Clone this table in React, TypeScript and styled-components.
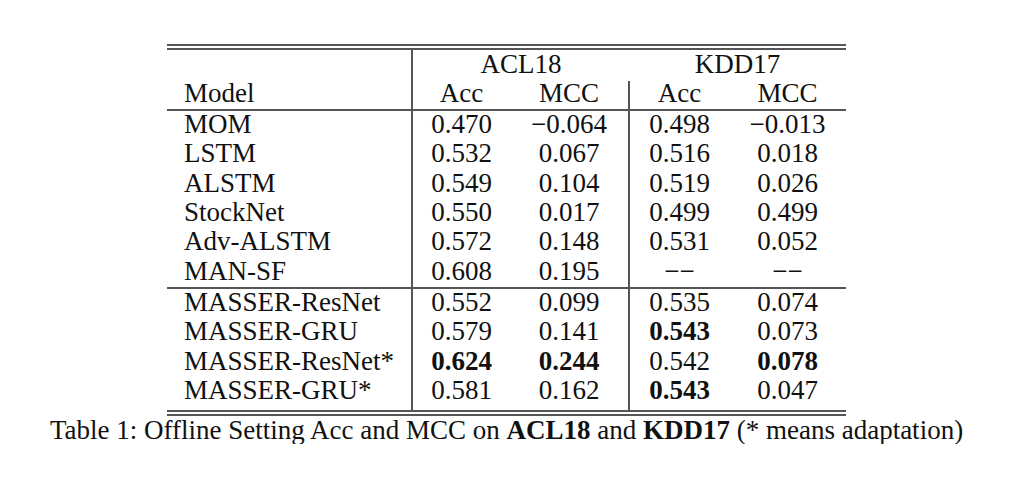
import { FC } from "react";
import styled, { createGlobalStyle } from "styled-components";

interface IRow {
  model: string;
  values: string[];
  bold?: boolean[];
  ruleAfter?: boolean;
}

const rows: IRow[] = [
  { model: "MOM", values: ["0.470", "\u22120.064", "0.498", "\u22120.013"] },
  { model: "LSTM", values: ["0.532", "0.067", "0.516", "0.018"] },
  { model: "ALSTM", values: ["0.549", "0.104", "0.519", "0.026"] },
  { model: "StockNet", values: ["0.550", "0.017", "0.499", "0.499"] },
  { model: "Adv-ALSTM", values: ["0.572", "0.148", "0.531", "0.052"] },
  {
    model: "MAN-SF",
    values: ["0.608", "0.195", "\u2212\u2212", "\u2212\u2212"],
    ruleAfter: true,
  },
  { model: "MASSER-ResNet", values: ["0.552", "0.099", "0.535", "0.074"] },
  {
    model: "MASSER-GRU",
    values: ["0.579", "0.141", "0.543", "0.073"],
    bold: [false, false, true, false],
  },
  {
    model: "MASSER-ResNet*",
    values: ["0.624", "0.244", "0.542", "0.078"],
    bold: [true, true, false, true],
  },
  {
    model: "MASSER-GRU*",
    values: ["0.581", "0.162", "0.543", "0.047"],
    bold: [false, false, true, false],
  },
];

const colWidths = [245, 98, 119, 100, 117];

const App: FC = (): JSX.Element => {
  return (
    <Page>
      <GlobalStyle />
      <Figure>
        <RuleFrame>
          <Table>
            <colgroup>
              {colWidths.map((w, i) => (
                <col key={i} style={{ width: w }} />
              ))}
            </colgroup>
            <thead>
              <tr>
                <Cell as="th" $divider $height={28} />
                <Cell as="th" colSpan={2} $height={28}>
                  ACL18
                </Cell>
                <Cell as="th" colSpan={2} $height={28}>
                  KDD17
                </Cell>
              </tr>
              <tr>
                <Cell as="th" $left $divider $rule $height={23} $lift={5}>
                  Model
                </Cell>
                <Cell as="th" $rule $height={23} $lift={5}>
                  Acc
                </Cell>
                <Cell as="th" $rule $divider $height={23} $lift={5}>
                  MCC
                </Cell>
                <Cell as="th" $rule $height={23} $lift={5}>
                  Acc
                </Cell>
                <Cell as="th" $rule $height={23} $lift={5}>
                  MCC
                </Cell>
              </tr>
            </thead>
            <tbody>
              {rows.map((row, r) => {
                // a bit more room above the bottom rule, as in LaTeX
                const lift = r === rows.length - 1 ? 7 : 3;
                return (
                  <tr key={row.model}>
                    <Cell $left $divider $rule={row.ruleAfter} $lift={lift}>
                      {row.model}
                    </Cell>
                    {row.values.map((v, i) => (
                      <Cell
                        key={i}
                        $divider={i === 1}
                        $rule={row.ruleAfter}
                        $bold={row.bold?.[i]}
                        $lift={lift}
                      >
                        {v}
                      </Cell>
                    ))}
                  </tr>
                );
              })}
            </tbody>
          </Table>
        </RuleFrame>
        <Caption>
          Table 1: Offline Setting Acc and MCC on <b>ACL18</b> and{" "}
          <b>KDD17</b> (* means adaptation)
        </Caption>
      </Figure>
    </Page>
  );
};

export default App;

const GlobalStyle = createGlobalStyle`
  body {
    margin: 0;
    background: #fff;
  }
`;

const Page = styled.div`
  padding: 44px 0 0 50px;
  font-family: "Liberation Serif", "Times New Roman", serif;
  color: #111;
`;

const Figure = styled.figure`
  margin: 0;
  width: 913px;
  display: flex;
  flex-direction: column;
  align-items: center;
`;

const RuleFrame = styled.div`
  border-top: 2px solid #555;
  border-bottom: 2px solid #555;
  padding: 2px 0;
`;

const Table = styled.table`
  border-collapse: collapse;
  table-layout: fixed;
  width: 679px;
  border-top: 2px solid #555;
  border-bottom: 2px solid #555;
  font-size: 27px;
`;

const Cell = styled.td<{
  $left?: boolean;
  $divider?: boolean;
  $rule?: boolean;
  $bold?: boolean;
  $height?: number;
  $lift?: number;
}>`
  height: ${({ $height }) => $height ?? 26.3}px;
  padding: 0 0 ${({ $lift }) => $lift ?? 3}px
    ${({ $left }) => ($left ? "17px" : "0")};
  text-align: ${({ $left }) => ($left ? "left" : "center")};
  font-weight: ${({ $bold }) => ($bold ? 700 : 400)};
  line-height: 20px;
  vertical-align: middle;
  white-space: nowrap;
  border-right: ${({ $divider }) => ($divider ? "2px solid #555" : "none")};
  border-bottom: ${({ $rule }) => ($rule ? "2px solid #555" : "none")};
`;

const Caption = styled.figcaption`
  font-size: 27px;
  line-height: 28px;
  margin-top: 0;
  white-space: nowrap;
`;
